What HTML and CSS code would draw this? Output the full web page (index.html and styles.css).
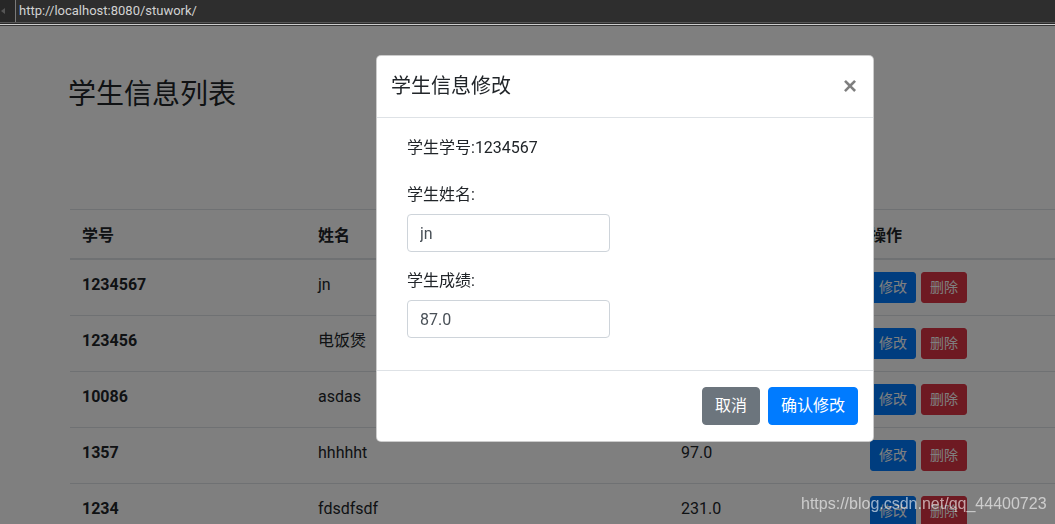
FILE: index.html
```html
<!DOCTYPE html>
<html lang="zh-CN">
<head>
<meta charset="utf-8">
<title>学生信息列表</title>
<link rel="stylesheet" href="styles.css">
</head>
<body>
<div class="topbar">
  <div class="nav"><span class="nav-arrow"></span></div>
  <div class="urlbox">http://localhost:8080/stuwork/</div>
</div>

<div class="page">
  <h3 class="page-title">学生信息列表</h3>
  <table class="table">
    <thead>
      <tr>
        <th class="c1">学号</th>
        <th class="c2">姓名</th>
        <th class="c3">成绩</th>
        <th class="c4">操作</th>
      </tr>
    </thead>
    <tbody>
      <tr>
        <th>1234567</th><td>jn</td><td>87.0</td>
        <td><div class="ops"><button class="btn-sm primary">修改</button><button class="btn-sm danger">删除</button></div></td>
      </tr>
      <tr>
        <th>123456</th><td>电饭煲</td><td>60.0</td>
        <td><div class="ops"><button class="btn-sm primary">修改</button><button class="btn-sm danger">删除</button></div></td>
      </tr>
      <tr>
        <th>10086</th><td>asdas</td><td>100.0</td>
        <td><div class="ops"><button class="btn-sm primary">修改</button><button class="btn-sm danger">删除</button></div></td>
      </tr>
      <tr>
        <th>1357</th><td>hhhhht</td><td>97.0</td>
        <td><div class="ops"><button class="btn-sm primary">修改</button><button class="btn-sm danger">删除</button></div></td>
      </tr>
      <tr>
        <th>1234</th><td>fdsdfsdf</td><td>231.0</td>
        <td><div class="ops"><button class="btn-sm primary">修改</button><button class="btn-sm danger">删除</button></div></td>
      </tr>
    </tbody>
  </table>
</div>

<div class="backdrop"></div>

<div class="modal">
  <div class="modal-header">
    <h5 class="modal-title">学生信息修改</h5>
    <button class="close">×</button>
  </div>
  <div class="modal-body">
    <div class="info">学生学号:1234567</div>
    <div class="form-group">
      <label class="label">学生姓名:</label>
      <input class="input" type="text" value="jn">
    </div>
    <div class="form-group">
      <label class="label">学生成绩:</label>
      <input class="input" type="text" value="87.0">
    </div>
  </div>
  <div class="modal-footer">
    <button class="btn secondary">取消</button>
    <button class="btn primary-solid">确认修改</button>
  </div>
</div>

<div class="watermark">https://blog.csdn.net/qq_44400723</div>
</body>
</html>
```

FILE: styles.css
```css
html, body {
  margin: 0;
  padding: 0;
  width: 1055px;
  height: 524px;
  overflow: hidden;
  background: #fff;
}

body {
  font-family: "Segoe UI", Roboto, "Noto Sans CJK SC", sans-serif;
  font-size: 16px;
  line-height: 1.5;
  color: #212529;
}

.topbar {
  display: flex;
  height: 26px;
  background: linear-gradient(to bottom,
    #2e2e2e 0, #2e2e2e 22px,
    #565656 22px, #565656 23px,
    #2a2a2a 23px, #2a2a2a 24px,
    #cdcdcd 24px, #cdcdcd 25px,
    #343434 25px, #343434 26px);
  position: relative;
  z-index: 3;
}

.nav {
  width: 15px;
  height: 22px;
  background: #272727;
  display: flex;
  align-items: center;
}

.nav-arrow {
  width: 0;
  height: 0;
  border-top: 3px solid transparent;
  border-bottom: 3px solid transparent;
  border-right: 4px solid #555;
  margin-left: 1px;
}

.urlbox {
  flex: 1;
  height: 22px;
  box-sizing: border-box;
  border-left: 1px solid #7a7a7a;
  padding-left: 3px;
  color: #d2d2d2;
  font-family: "Segoe UI", Roboto, "Noto Sans CJK SC", sans-serif;
  font-size: 13px;
  line-height: 21px;
}

.page {
  padding: 52px 0 0 68px;
}

.page-title {
  margin: 0 0 97px;
  font-size: 28px;
  font-weight: 400;
  line-height: 1.2;
}

.table {
  width: 1000px;
  margin-left: 2px;
  border-collapse: collapse;
}

.table th,
.table td {
  padding: 13px 12px 11px;
  border-top: 1px solid #dee2e6;
  vertical-align: top;
  text-align: left;
  white-space: nowrap;
}

.table th {
  font-weight: 700;
}

.table thead th {
  padding: 14px 12px 10px;
  border-bottom: 2px solid #dee2e6;
}

.c1 { width: 212px; }
.c2 { width: 339px; }
.c3 { width: 165px; }

.ops {
  display: flex;
  gap: 5px;
  margin: -1px 0 1px;
}

.btn-sm {
  font-family: inherit;
  font-size: 14px;
  line-height: 21px;
  padding: 4px 8px;
  border: 1px solid transparent;
  border-radius: 3px;
  color: #fff;
  margin: 0;
}

.btn-sm.primary { background: #007bff; border-color: #007bff; }
.btn-sm.danger { background: #dc3545; border-color: #dc3545; }

.backdrop {
  position: fixed;
  top: 26px;
  left: 0;
  right: 0;
  bottom: 0;
  background: rgba(0, 0, 0, 0.5);
  z-index: 1;
}

.modal {
  position: absolute;
  left: 376px;
  top: 55px;
  width: 498px;
  box-sizing: border-box;
  background: #fff;
  border: 1px solid rgba(0, 0, 0, 0.2);
  border-radius: 5px;
  z-index: 2;
}

.modal-header {
  display: flex;
  align-items: flex-start;
  padding: 15px 16px 16px 14px;
  border-bottom: 1px solid #dee2e6;
}

.modal-title {
  margin: 0;
  font-size: 20px;
  font-weight: 400;
  line-height: 30px;
  flex: 1;
}

.close {
  margin: 0;
  padding: 0;
  border: 0;
  background: transparent;
  font-family: "Liberation Sans", Arial, sans-serif;
  font-size: 24px;
  font-weight: 700;
  line-height: 30px;
  color: #000;
  opacity: 0.5;
}

.modal-body {
  padding: 16px 30px;
}

.info {
  padding-top: 2px;
  margin-bottom: 22px;
}

.form-group {
  margin-bottom: 16px;
}

.label {
  display: block;
  padding-top: 1px;
  margin-bottom: 7px;
}

.input {
  display: block;
  width: 203px;
  height: 38px;
  box-sizing: border-box;
  padding: 6px 12px;
  border: 1px solid #ced4da;
  border-radius: 4px;
  font-family: inherit;
  font-size: 16px;
  line-height: 24px;
  color: #495057;
  margin: 0;
}

.modal-footer {
  display: flex;
  justify-content: flex-end;
  gap: 8px;
  padding: 16px 15px 16px 16px;
  border-top: 1px solid #dee2e6;
}

.btn {
  font-family: inherit;
  font-size: 16px;
  line-height: 24px;
  padding: 6px 12px;
  border: 1px solid transparent;
  border-radius: 4px;
  color: #fff;
  margin: 0;
}

.btn.secondary { background: #6c757d; border-color: #6c757d; }
.btn.primary-solid { background: #007bff; border-color: #007bff; }

.watermark {
  position: absolute;
  left: 801px;
  top: 494px;
  font-family: "Liberation Sans", Arial, sans-serif;
  font-size: 16px;
  line-height: 20px;
  color: rgba(255, 255, 255, 0.6);
  z-index: 4;
  white-space: nowrap;
}
```
